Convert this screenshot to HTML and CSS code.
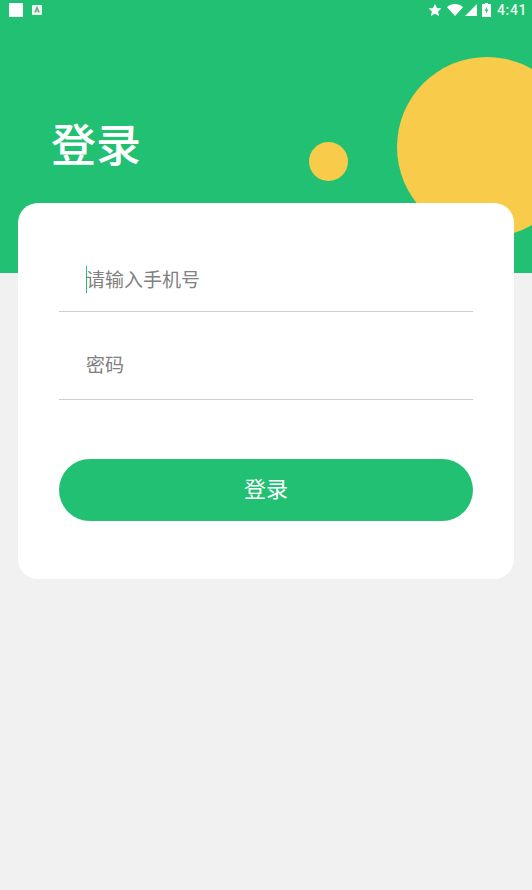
FILE: index.html
```html
<!DOCTYPE html>
<html lang="zh-CN">
<head>
<meta charset="utf-8">
<title>登录</title>
<link rel="stylesheet" href="styles.css">
</head>
<body>
<div class="page">
  <header class="hero">
    <div class="status">
      <div class="status-left">
        <span class="sq"></span>
        <svg class="notif" viewBox="0 0 10 10" width="10" height="10"><rect x="0" y="0" width="10" height="10" rx="1" fill="#eaf8f0"/><path d="M2.800 7.600 5 2.400l2.200 5.200M3.600 6h2.800" fill="none" stroke="#6c9c85" stroke-width="1.200"/></svg>
      </div>
      <div class="status-right">
        <svg width="14" height="14" viewBox="0 0 24 24"><path d="M12 1.500l3.300 7 7.700.9-5.700 5.200 1.600 7.600L12 18.400l-6.900 3.800 1.600-7.600L1 9.400l7.700-.9z" fill="#fff"/></svg>
        <svg class="wifi" width="16" height="12" viewBox="0 0 16 12"><path d="M0 3.200C2 1.200 5 0 8 0s6 1.200 8 3.200L8 12z" fill="#fff"/></svg>
        <svg class="cell" width="12" height="12" viewBox="0 0 12 12"><path d="M12 0v12H0z" fill="#fff"/></svg>
        <svg class="batt" width="9" height="14" viewBox="0 0 9 14"><path d="M3 0h3v1h3v13H0V1h3z" fill="#fff"/><path d="M5.200 3.200 2.600 7.800h1.700L3.800 11l2.700-4.600H4.700z" fill="#21c072"/></svg>
        <span class="time">4:41</span>
      </div>
    </div>
    <h1 class="title">登录</h1>
    <span class="ball ball-big"></span>
    <span class="ball ball-small"></span>
  </header>
  <main class="card">
    <div class="field field-phone"><span class="caret"></span><span class="ph">请输入手机号</span></div>
    <div class="field field-pass"><span class="ph">密码</span></div>
    <button class="submit" type="button">登录</button>
  </main>
</div>
</body>
</html>
```
FILE: styles.css
```css
* { box-sizing: border-box; }
html, body { margin: 0; padding: 0; }
body {
  width: 532px;
  height: 890px;
  overflow: hidden;
  background: #f1f1f1;
  font-family: Roboto, "Noto Sans CJK SC", sans-serif;
}
.page { display: flow-root; }
.hero {
  position: relative;
  height: 273px;
  background: #21c072;
  overflow: hidden;
}
.status {
  position: relative;
  z-index: 1;
  height: 24px;
  display: flex;
  justify-content: space-between;
  align-items: center;
  padding: 0 5px 4px 9px;
}
.status-left { display: flex; align-items: center; gap: 9px; }
.sq { width: 14px; height: 14px; background: #fff; display: block; }
.status-right { display: flex; align-items: center; }
.wifi { margin-left: 5px; }
.cell { margin-left: 2px; }
.batt { margin-left: 5px; }
.time { margin-left: 6px; font-size: 14px; line-height: 16px; font-weight: 500; color: #e9f8f0; letter-spacing: .6px; }
.title {
  margin: 93px 0 0 51px;
  font-size: 45px;
  line-height: 60px;
  font-weight: 500;
  color: #fff;
}
.ball { position: absolute; border-radius: 50%; background: #f8cb4a; }
.ball-big { left: 397px; top: 57px; width: 180px; height: 180px; }
.ball-small { left: 309px; top: 142px; width: 39px; height: 39px; }
.card {
  position: relative;
  margin: -70px 18px 0;
  height: 376px;
  padding: 47px 41px 0;
  background: #fff;
  border-radius: 20px;
}
.field {
  display: flex;
  padding-left: 27px;
  border-bottom: 1px solid #cfcfcf;
  font-size: 19px;
  color: #808080;
}
.field-phone { height: 62px; align-items: flex-start; padding-top: 16px; }
.field-pass { height: 88px; align-items: flex-end; padding-bottom: 20px; }
.caret { width: 1px; height: 27px; background: #21c072; margin-right: -1px; flex: none; }
.ph { line-height: 27px; }
.field-phone .ph { padding-top: 1px; }
.submit {
  display: block;
  width: 100%;
  height: 62px;
  margin-top: 59px;
  border: 0;
  border-radius: 31px;
  background: #21c072;
  color: #fff;
  font: 400 22px/1 Roboto, "Noto Sans CJK SC", sans-serif;
}
```
